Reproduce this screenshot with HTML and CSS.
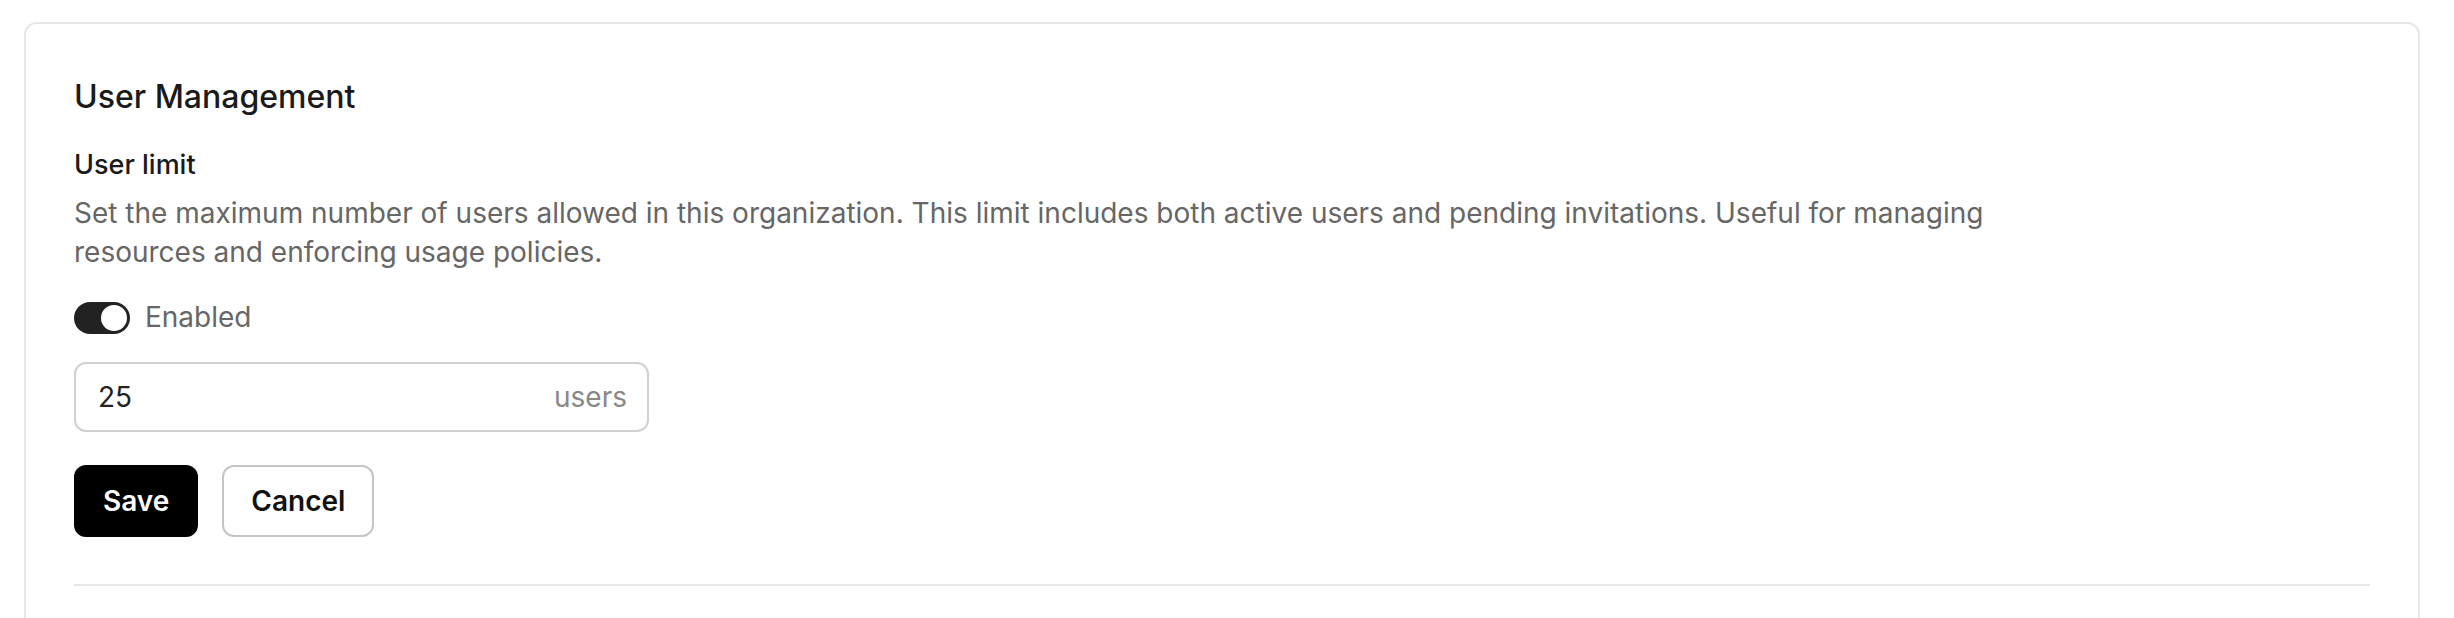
FILE: index.html
```html
<!DOCTYPE html>
<html lang="en">
<head>
<meta charset="utf-8">
<title>User Management</title>
<link rel="stylesheet" href="styles.css">
</head>
<body>
<div class="page">
  <section class="card">
    <h2 class="card-title">User Management</h2>
    <div class="setting">
      <h3 class="setting-label">User limit</h3>
      <p class="setting-desc">Set the maximum number of users allowed in this organization. This limit includes both active users and pending invitations. Useful for managing resources and enforcing usage policies.</p>
      <label class="toggle-row">
        <span class="toggle"><span class="knob"></span></span>
        <span class="toggle-text">Enabled</span>
      </label>
      <div class="input-box">
        <span class="input-value">25</span>
        <span class="input-suffix">users</span>
      </div>
      <div class="actions">
        <button class="btn btn-primary" type="button">Save</button>
        <button class="btn btn-secondary" type="button">Cancel</button>
      </div>
    </div>
    <hr class="divider">
  </section>
</div>
</body>
</html>
```

FILE: styles.css
```css
* { box-sizing: border-box; }
html, body {
  margin: 0;
  padding: 0;
  background: #ffffff;
  font-family: Inter, "Noto Sans", "Liberation Sans", sans-serif;
  color: #1a1a1a;
}
.page {
  padding: 22px 34px 0 24px;
  height: 618px;
  overflow: hidden;
}
.card {
  border: 2px solid #e6e6e6;
  border-radius: 13px;
  padding: 49px 48px 60px 48px;
  background: #fff;
}
.card-title {
  margin: 0 0 24px 0;
  font-size: 32px;
  line-height: 48px;
  font-weight: 500;
  color: #1a1a1a;
}
.setting-label {
  margin: 0 0 9px 0;
  font-size: 27px;
  line-height: 40px;
  font-weight: 500;
  color: #1a1a1a;
}
.setting-desc {
  margin: 0;
  max-width: 1980px;
  font-size: 28px;
  line-height: 39.4px;
  color: #666666;
}
.toggle-row {
  display: flex;
  align-items: center;
  gap: 15px;
  margin-top: 25px;
  height: 39.4px;
}
.toggle {
  display: flex;
  align-items: center;
  justify-content: flex-end;
  width: 56px;
  height: 32px;
  padding: 0 3px;
  border-radius: 16px;
  background: #222222;
}
.knob {
  width: 26px;
  height: 26px;
  border-radius: 50%;
  background: #ffffff;
}
.toggle-text {
  font-size: 28px;
  line-height: 39.4px;
  color: #666666;
}
.input-box {
  display: flex;
  align-items: center;
  justify-content: space-between;
  width: 575px;
  height: 70px;
  margin-top: 25px;
  padding: 0 20px 0 22px;
  border: 2px solid #d0d0d0;
  border-radius: 12px;
}
.input-value {
  font-size: 28px;
  color: #222222;
}
.input-suffix {
  font-size: 28px;
  color: #888888;
}
.actions {
  display: flex;
  gap: 24px;
  margin-top: 33px;
}
.btn {
  height: 72px;
  padding: 0 27px;
  border-radius: 12px;
  font-family: Inter, "Noto Sans", "Liberation Sans", sans-serif;
  font-size: 28px;
  font-weight: 600;
  cursor: pointer;
}
.btn-primary {
  background: #000000;
  color: #ffffff;
  border: 2px solid #000000;
}
.btn-secondary {
  background: #ffffff;
  color: #111111;
  border: 2px solid #c4c4c4;
}
.divider {
  margin: 46.5px 0 0 0;
  border: 0;
  border-top: 2px solid #e8e8e8;
}
```
